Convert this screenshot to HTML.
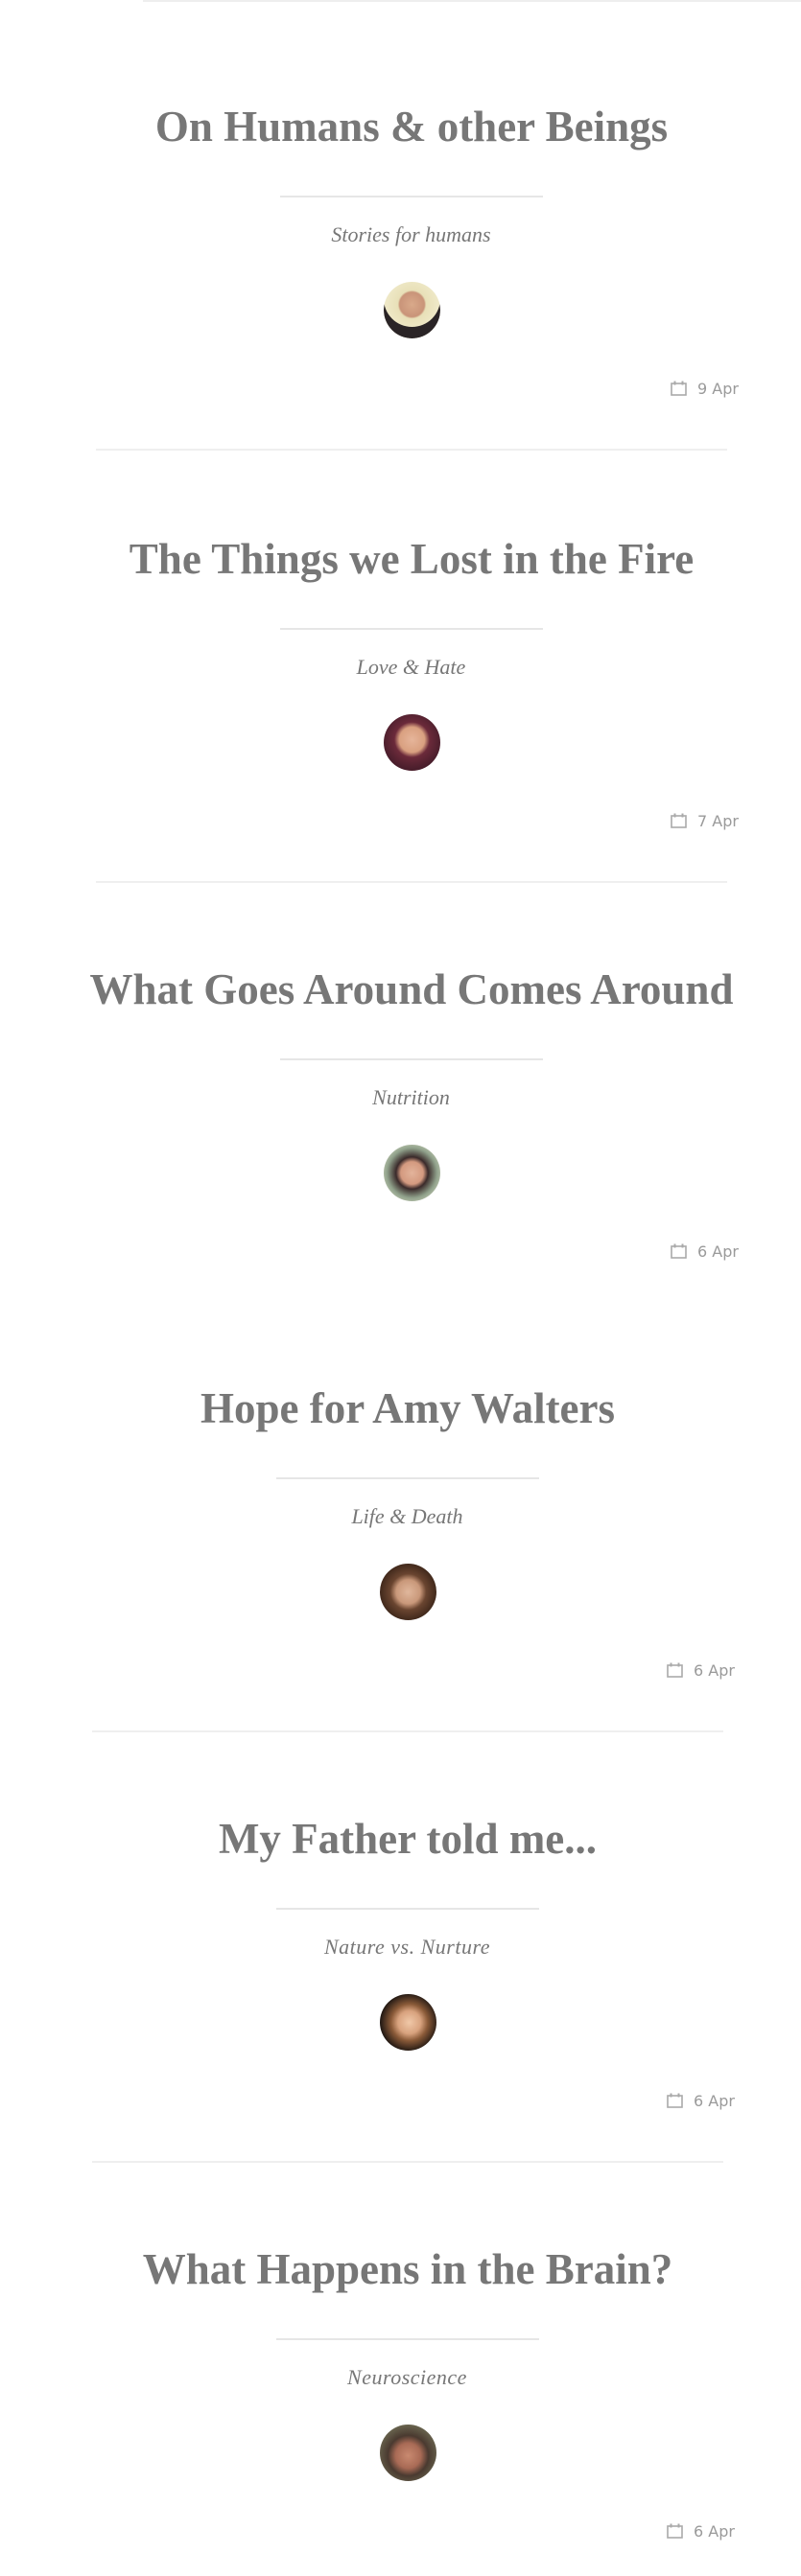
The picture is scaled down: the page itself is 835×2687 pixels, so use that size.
<!DOCTYPE html>
<html><head><meta charset="utf-8"><style>
html,body{margin:0;padding:0;background:#fff;width:835px;height:2687px;overflow:hidden;position:relative}
.topline{position:absolute;left:149px;top:0;width:686px;height:2px;background:#eee}
.post{position:absolute;left:0;width:835px;height:400px}
.t{position:absolute;width:1235px;text-align:center;font-family:"Liberation Serif",serif;font-weight:bold;font-size:45px;line-height:45px;color:#777;white-space:nowrap}
.dv{position:absolute;width:274px;height:2px;background:#e6e6e6;top:94px}
.s{position:absolute;left:0;width:835px;text-align:center;font-family:"Liberation Serif",serif;font-style:italic;font-size:22px;line-height:22px;color:#777;top:124px}
.av{position:absolute;width:59px;height:59px;border-radius:50%;top:184px}
.d{position:absolute;top:288px;font-family:"DejaVu Sans",sans-serif;font-size:16px;line-height:16px;color:#9a9a9a;white-space:nowrap}
.d svg{position:absolute;left:-28px;top:-1px}
.sep{position:absolute;height:2px;background:#efefef;top:358px;width:658px}
</style></head><body>
<div class="topline"></div>

<div class="post" style="top:110px">
<div class="t" style="left:-188.5px">On Humans &amp; other Beings</div>
<div class="dv" style="left:292px"></div>
<div class="s" style="left:11px">Stories for humans</div>
<div class="av" style="left:400px;background:radial-gradient(circle at 50% 40%,#d9a98a 0,#c99479 28%,#e8e0b8 32%,#efe9c8 60%,#e6ddb6 70%),#222;box-shadow:inset 0 -12px 0 #2a2426"></div>
<div class="d" style="left:727px"><svg width="17" height="16" viewBox="0 0 17 16"><rect x="1" y="3" width="15" height="12" fill="none" stroke="#aaa" stroke-width="1.6"/><rect x="3.5" y="0.5" width="2" height="4" fill="#aaa"/><rect x="11.5" y="0.5" width="2" height="4" fill="#aaa"/></svg>9 Apr</div>
<div class="sep" style="left:100px"></div>
</div>

<div class="post" style="top:561px">
<div class="t" style="left:-188.5px">The Things we Lost in the Fire</div>
<div class="dv" style="left:292px"></div>
<div class="s" style="left:11px">Love &amp; Hate</div>
<div class="av" style="left:400px;background:radial-gradient(circle at 50% 45%,#e6b59a 0,#d9a080 30%,#6b2a3a 42%,#4a1e2c 70%)"></div>
<div class="d" style="left:727px"><svg width="17" height="16" viewBox="0 0 17 16"><rect x="1" y="3" width="15" height="12" fill="none" stroke="#aaa" stroke-width="1.6"/><rect x="3.5" y="0.5" width="2" height="4" fill="#aaa"/><rect x="11.5" y="0.5" width="2" height="4" fill="#aaa"/></svg>7 Apr</div>
<div class="sep" style="left:100px"></div>
</div>

<div class="post" style="top:1010px">
<div class="t" style="left:-188.5px">What Goes Around Comes Around</div>
<div class="dv" style="left:292px"></div>
<div class="s" style="left:11px">Nutrition</div>
<div class="av" style="left:400px;background:radial-gradient(circle at 50% 50%,#e3b39a 0,#d49a80 28%,#3a2a2a 40%,#8fa08a 62%,#b5c0a8 75%)"></div>
<div class="d" style="left:727px"><svg width="17" height="16" viewBox="0 0 17 16"><rect x="1" y="3" width="15" height="12" fill="none" stroke="#aaa" stroke-width="1.6"/><rect x="3.5" y="0.5" width="2" height="4" fill="#aaa"/><rect x="11.5" y="0.5" width="2" height="4" fill="#aaa"/></svg>6 Apr</div>
</div>

<div class="post" style="top:1447px">
<div class="t" style="left:-192.5px">Hope for Amy Walters</div>
<div class="dv" style="left:288px"></div>
<div class="s" style="left:7px">Life &amp; Death</div>
<div class="av" style="left:396px;background:radial-gradient(circle at 50% 50%,#e0b79c 0,#c9987a 30%,#6a4530 45%,#3a2418 75%)"></div>
<div class="d" style="left:723px"><svg width="17" height="16" viewBox="0 0 17 16"><rect x="1" y="3" width="15" height="12" fill="none" stroke="#aaa" stroke-width="1.6"/><rect x="3.5" y="0.5" width="2" height="4" fill="#aaa"/><rect x="11.5" y="0.5" width="2" height="4" fill="#aaa"/></svg>6 Apr</div>
<div class="sep" style="left:96px"></div>
</div>

<div class="post" style="top:1896px">
<div class="t" style="left:-192.5px">My Father told me...</div>
<div class="dv" style="left:288px"></div>
<div class="s" style="left:7px;letter-spacing:0.5px">Nature vs. Nurture</div>
<div class="av" style="left:396px;background:radial-gradient(circle at 52% 50%,#f0c8a8 0,#d8a27e 28%,#8a5a38 45%,#1e1612 72%)"></div>
<div class="d" style="left:723px"><svg width="17" height="16" viewBox="0 0 17 16"><rect x="1" y="3" width="15" height="12" fill="none" stroke="#aaa" stroke-width="1.6"/><rect x="3.5" y="0.5" width="2" height="4" fill="#aaa"/><rect x="11.5" y="0.5" width="2" height="4" fill="#aaa"/></svg>6 Apr</div>
<div class="sep" style="left:96px"></div>
</div>

<div class="post" style="top:2345px">
<div class="t" style="left:-192.5px">What Happens in the Brain?</div>
<div class="dv" style="left:288px"></div>
<div class="s" style="left:7px;letter-spacing:0.5px">Neuroscience</div>
<div class="av" style="left:396px;background:radial-gradient(circle at 50% 55%,#c98a70 0,#a86a55 30%,#4a3a30 48%,#6a6650 75%)"></div>
<div class="d" style="left:723px"><svg width="17" height="16" viewBox="0 0 17 16"><rect x="1" y="3" width="15" height="12" fill="none" stroke="#aaa" stroke-width="1.6"/><rect x="3.5" y="0.5" width="2" height="4" fill="#aaa"/><rect x="11.5" y="0.5" width="2" height="4" fill="#aaa"/></svg>6 Apr</div>
</div>
</body></html>
